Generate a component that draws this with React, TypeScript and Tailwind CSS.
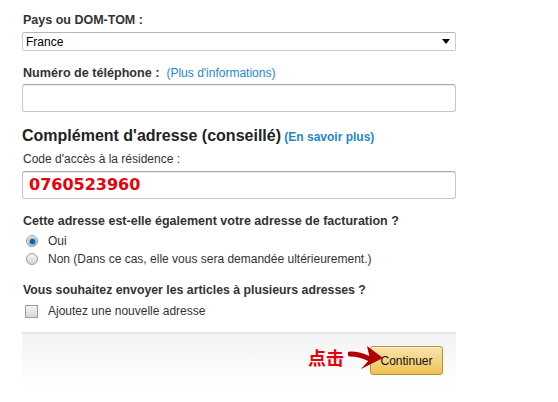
const Radio = ({ checked }: { checked?: boolean }) => (
  <span className="relative inline-flex h-[12px] w-[12px] items-center justify-center rounded-full border border-[#9a9a9a] bg-gradient-to-b from-[#f4f4f4] to-[#d8d8d8]">
    {checked && <span className="h-[5px] w-[5px] rounded-full bg-[#1d5e93] shadow-[0_0_2px_1px_#4a8fca]" />}
  </span>
);

const Arrow = () => (
  <svg width="40" height="28" viewBox="0 0 40 28" className="absolute left-[326px] top-[10px]">
    <path d="M2 10 C10 10 16 12 22 15" stroke="#b00000" strokeWidth="5" fill="none" strokeLinecap="round" />
    <path d="M19 2 L35 14 L13 25 L22 15 Z" fill="#b00000" />
  </svg>
);

export default function App() {
  return (
    <div className="h-[402px] w-[558px] bg-white pl-[22px] pt-[12px] text-[12px] text-[#333] [font-family:'Liberation_Sans',Arial,sans-serif]">
      <div className="w-[434px]">
        {/* Pays */}
        <div className="pl-[1px] text-[12.5px] font-bold leading-4">Pays ou DOM-TOM :</div>
        <div className="mt-[4px] flex h-[19px] items-center justify-between rounded-[2px] border border-[#c9c9c9] border-t-[#b5b5b5] pl-[3px] pr-[5px] text-black">
          <span>France</span>
          <span className="h-0 w-0 border-x-[4px] border-t-[5px] border-x-transparent border-t-black" />
        </div>

        {/* Téléphone */}
        <div className="mt-[14px] pl-[1px] leading-4">
          <span className="text-[12.6px] font-bold">Numéro de téléphone :</span>
          <span className="ml-[7px] text-[#1e88c8]">(Plus d'informations)</span>
        </div>
        <div className="mt-[3px] h-[28px] rounded-[3px] border border-[#c6c6c6] border-t-[#a9a9a9] shadow-[inset_0_1px_1px_rgba(0,0,0,0.08)]" />

        {/* Complément */}
        <div className="mt-[14px] leading-5">
          <span className="text-[16px] font-bold text-[#222]">Complément d'adresse (conseillé)</span>{" "}
          <span className="font-bold text-[#1e88c8]">(En savoir plus)</span>
        </div>
        <div className="mt-[4px] pl-[1px] leading-4">Code d'accès à la résidence :</div>
        <div className="mt-[4px] flex h-[28px] items-center rounded-[3px] border border-[#c6c6c6] border-t-[#a9a9a9] pl-[6px] shadow-[inset_0_1px_1px_rgba(0,0,0,0.08)]">
          <span className="text-[16px] font-bold text-[#e8000b] [font-family:'DejaVu_Sans',sans-serif]">0760523960</span>
        </div>

        {/* Facturation */}
        <div className="mt-[14px] pl-[1px] text-[12.5px] font-bold leading-4">
          Cette adresse est-elle également votre adresse de facturation ?
        </div>
        <div className="mt-[4px] flex items-center gap-[10px] pl-[4px] leading-4">
          <Radio checked />
          <span>Oui</span>
        </div>
        <div className="mt-[2px] flex items-center gap-[10px] pl-[4px] leading-4">
          <Radio />
          <span>Non (Dans ce cas, elle vous sera demandée ultérieurement.)</span>
        </div>

        {/* Plusieurs adresses */}
        <div className="mt-[15px] pl-[1px] text-[12.3px] font-bold leading-4">
          Vous souhaitez envoyer les articles à plusieurs adresses ?
        </div>
        <div className="mt-[5px] flex items-center gap-[10px] pl-[3px] leading-4">
          <span className="h-[13px] w-[13px] border border-[#9d9d9d] bg-gradient-to-b from-[#f3f3f3] to-[#d9d9d9]" />
          <span>Ajoutez une nouvelle adresse</span>
        </div>

        {/* Footer */}
        <div className="relative mt-[13px] flex h-[56px] items-start justify-end border-t-[2px] border-[#e4e4e4] bg-gradient-to-b from-[#f3f3f3] to-white pr-[13px] pt-[12px]">
          <span className="absolute left-[286px] top-[11px] text-[18px] font-bold leading-6 text-[#e8000b] [font-family:'Noto_Sans_CJK_SC',sans-serif]">
            点击
          </span>
          <button className="h-[29px] w-[73px] rounded-[3px] border border-[#b8942f] bg-gradient-to-b from-[#f8e3ad] to-[#eec24f] text-[12px] text-[#111] shadow-[inset_0_1px_0_rgba(255,255,255,0.6)]">
            Continuer
          </button>
          <Arrow />
        </div>
      </div>
    </div>
  );
}
